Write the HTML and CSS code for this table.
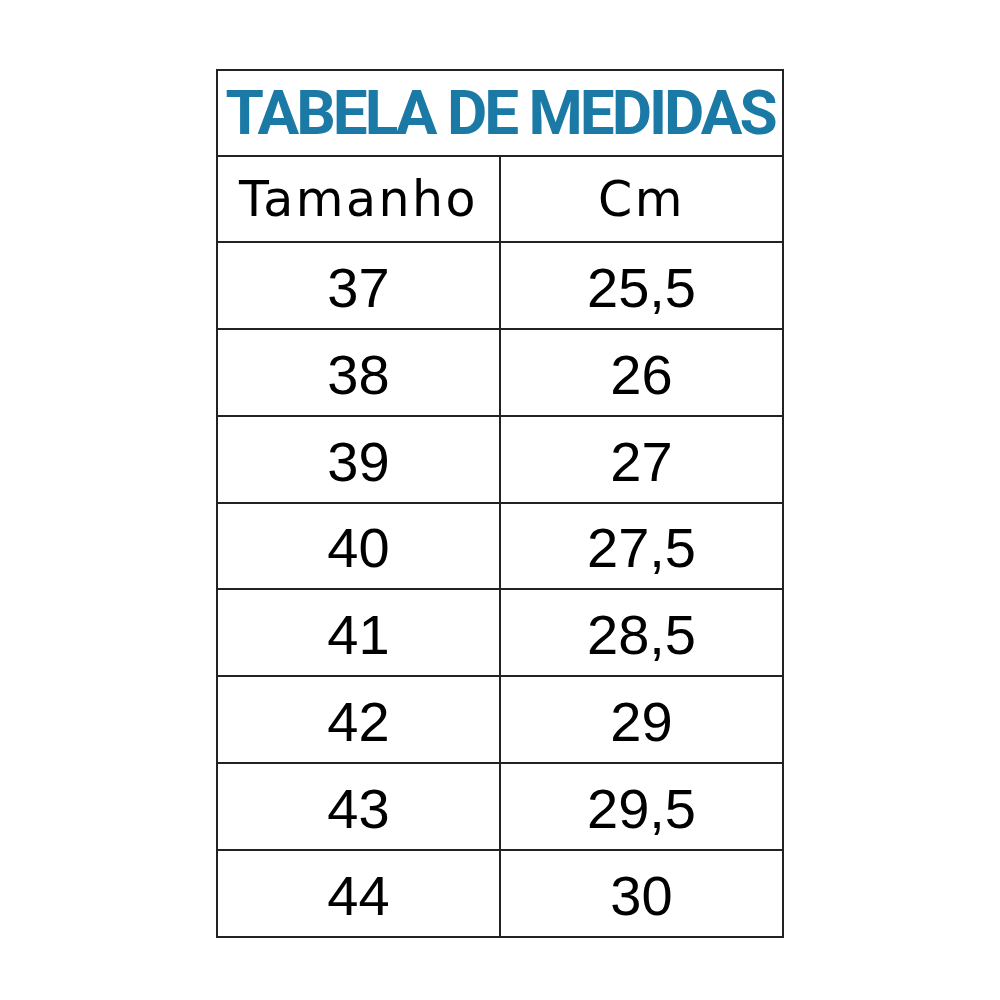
FILE: index.html
```html
<!DOCTYPE html>
<html lang="pt">
<head>
<meta charset="utf-8">
<title>Tabela de Medidas</title>
<link rel="stylesheet" href="styles.css">
</head>
<body>
<table class="sizes">
  <tr><th class="title" colspan="2">TABELA DE MEDIDAS</th></tr>
  <tr class="head"><td>Tamanho</td><td>Cm</td></tr>
  <tr><td>37</td><td>25,5</td></tr>
  <tr><td>38</td><td>26</td></tr>
  <tr><td>39</td><td>27</td></tr>
  <tr><td>40</td><td>27,5</td></tr>
  <tr><td>41</td><td>28,5</td></tr>
  <tr><td>42</td><td>29</td></tr>
  <tr><td>43</td><td>29,5</td></tr>
  <tr><td>44</td><td>30</td></tr>
</table>
</body>
</html>
```
FILE: styles.css
```css
html, body {
  margin: 0;
  padding: 0;
  background: #ffffff;
}

body {
  padding-top: 69px;
}

.sizes {
  border-collapse: collapse;
  margin: 0 auto;
  width: 568px;
  table-layout: fixed;
}

.sizes th,
.sizes td {
  border: 2px solid #222222;
  padding: 0;
  text-align: center;
  vertical-align: middle;
  font-family: "Liberation Sans", Arial, sans-serif;
  font-size: 56px;
  font-weight: 400;
  color: #000000;
  line-height: 1;
}

.sizes td {
  padding-top: 5px;
  height: 79.8px;
}

.sizes td:first-child {
  width: 282px;
}

.sizes .title {
  font-family: Roboto, "Liberation Sans", sans-serif;
  font-weight: 700;
  font-size: 62px;
  letter-spacing: -3px;
  color: #1b79a6;
  padding-top: 0;
  height: 83.6px;
}

.sizes .head td {
  font-family: "DejaVu Sans", sans-serif;
  font-size: 49px;
  letter-spacing: 2.5px;
  padding-top: 2px;
  height: 82.6px;
}
```
